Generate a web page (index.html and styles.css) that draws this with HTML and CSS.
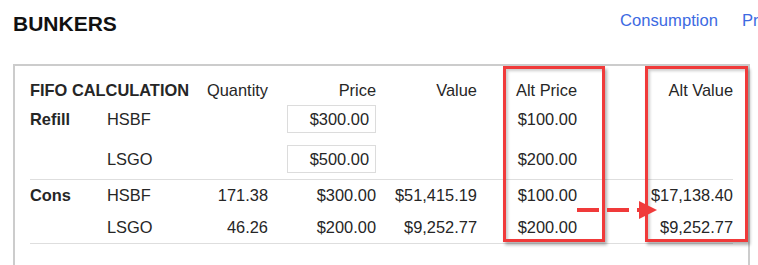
FILE: index.html
```html
<!DOCTYPE html>
<html lang="en">
<head>
  <meta charset="UTF-8" />
  <title>Bunkers</title>
  <link rel="stylesheet" href="styles.css">
</head>
<body>
  <header class="header">
    <h1 class="title">BUNKERS</h1>
    <nav class="nav-links">
      <a href="#consumption">Consumption</a>
      <a href="#prices">Prices</a>
    </nav>
  </header>

  <section class="card">
    <table class="fifo">
      <colgroup>
        <col class="c-label"><col class="c-product"><col class="c-qty">
        <col class="c-price"><col class="c-value"><col class="c-altprice"><col class="c-altvalue">
      </colgroup>
      <tr class="head">
        <th colspan="2" class="left">FIFO CALCULATION</th>
        <td>Quantity</td>
        <td class="num">Price</td>
        <td class="num">Value</td>
        <td class="num">Alt Price</td>
        <td class="num">Alt Value</td>
      </tr>
      <tr class="refill">
        <th class="left">Refill</th>
        <td>HSBF</td>
        <td></td>
        <td class="num"><input class="price-input" type="text" value="$300.00"></td>
        <td></td>
        <td class="num">$100.00</td>
        <td></td>
      </tr>
      <tr class="refill last">
        <th class="left"></th>
        <td>LSGO</td>
        <td></td>
        <td class="num"><input class="price-input" type="text" value="$500.00"></td>
        <td></td>
        <td class="num">$200.00</td>
        <td></td>
      </tr>
      <tr class="cons">
        <th class="left">Cons</th>
        <td>HSBF</td>
        <td class="num">171.38</td>
        <td class="num">$300.00</td>
        <td class="num">$51,415.19</td>
        <td class="num">$100.00</td>
        <td class="num">$17,138.40</td>
      </tr>
      <tr class="cons last">
        <th class="left"></th>
        <td>LSGO</td>
        <td class="num">46.26</td>
        <td class="num">$200.00</td>
        <td class="num">$9,252.77</td>
        <td class="num">$200.00</td>
        <td class="num">$9,252.77</td>
      </tr>
    </table>

    <!-- annotation marks drawn over the table -->
    <div class="mark mark-price"></div>
    <div class="mark mark-value"></div>
    <svg class="arrow" width="86" height="26" viewBox="0 0 86 26">
      <line x1="2" y1="12" x2="66" y2="12" stroke="#f03a3a" stroke-width="4" stroke-dasharray="22 8"/>
      <polygon points="64,3 82,12 64,21" fill="#f03a3a"/>
    </svg>
  </section>
</body>
</html>
```

FILE: styles.css
```css
* {
  margin: 0;
  padding: 0;
  box-sizing: border-box;
}

body {
  background: #ffffff;
  color: #262626;
  font-family: 'Liberation Sans', Arial, sans-serif;
  font-size: 16.4px;
  overflow: hidden;
  width: 758px;
  height: 265px;
}

.header {
  display: flex;
  align-items: flex-start;
  padding: 11px 0 28px 13px;
  margin-right: -30px;
}

.title {
  font-size: 21px;
  line-height: 25px;
  font-weight: bold;
  color: #111;
}

.nav-links {
  margin-left: auto;
  display: flex;
  gap: 24px;
}

.nav-links a {
  color: #3d6ae2;
  text-decoration: none;
  font-size: 16.6px;
  line-height: 19px;
}

.card {
  position: relative;
  margin-left: 13px;
  width: 737px;
  border: 2px solid #cccccc;
  padding: 11px 0 30px 15px;
}

.fifo {
  border-collapse: collapse;
  table-layout: fixed;
  width: 703px;
}

.c-label { width: 77px; }
.c-product { width: 100px; }
.c-qty { width: 61px; }
.c-price { width: 108px; }
.c-value { width: 101px; }
.c-altprice { width: 100px; }
.c-altvalue { width: 156px; }

.fifo th,
.fifo td {
  padding: 0;
  vertical-align: middle;
  white-space: nowrap;
  font-weight: normal;
  text-align: left;
}

.fifo th {
  font-weight: bold;
}

.fifo .num {
  text-align: right;
}

.head {
  height: 26px;
}

.refill {
  height: 32px;
}

.refill.last td,
.refill.last th {
  padding: 10px 0 6px;
}

.cons {
  height: 32px;
}

.fifo tr.last {
  border-bottom: 1px solid #dedede;
}

.price-input {
  width: 89px;
  height: 28px;
  border: 1px solid #dcdcdc;
  background: #fff;
  color: #262626;
  font: inherit;
  text-align: right;
  padding: 0 6px 0 0;
  vertical-align: middle;
}

.mark {
  position: absolute;
  top: 0;
  height: 176px;
  border: 3px solid #f03a3a;
  box-shadow: 2px 3px 3px rgba(0, 0, 0, 0.3), inset 2px 2px 3px rgba(0, 0, 0, 0.2);
}

.mark-price {
  left: 488px;
  width: 102px;
}

.mark-value {
  left: 630px;
  width: 103px;
}

.arrow {
  position: absolute;
  left: 560px;
  top: 132px;
}
```
